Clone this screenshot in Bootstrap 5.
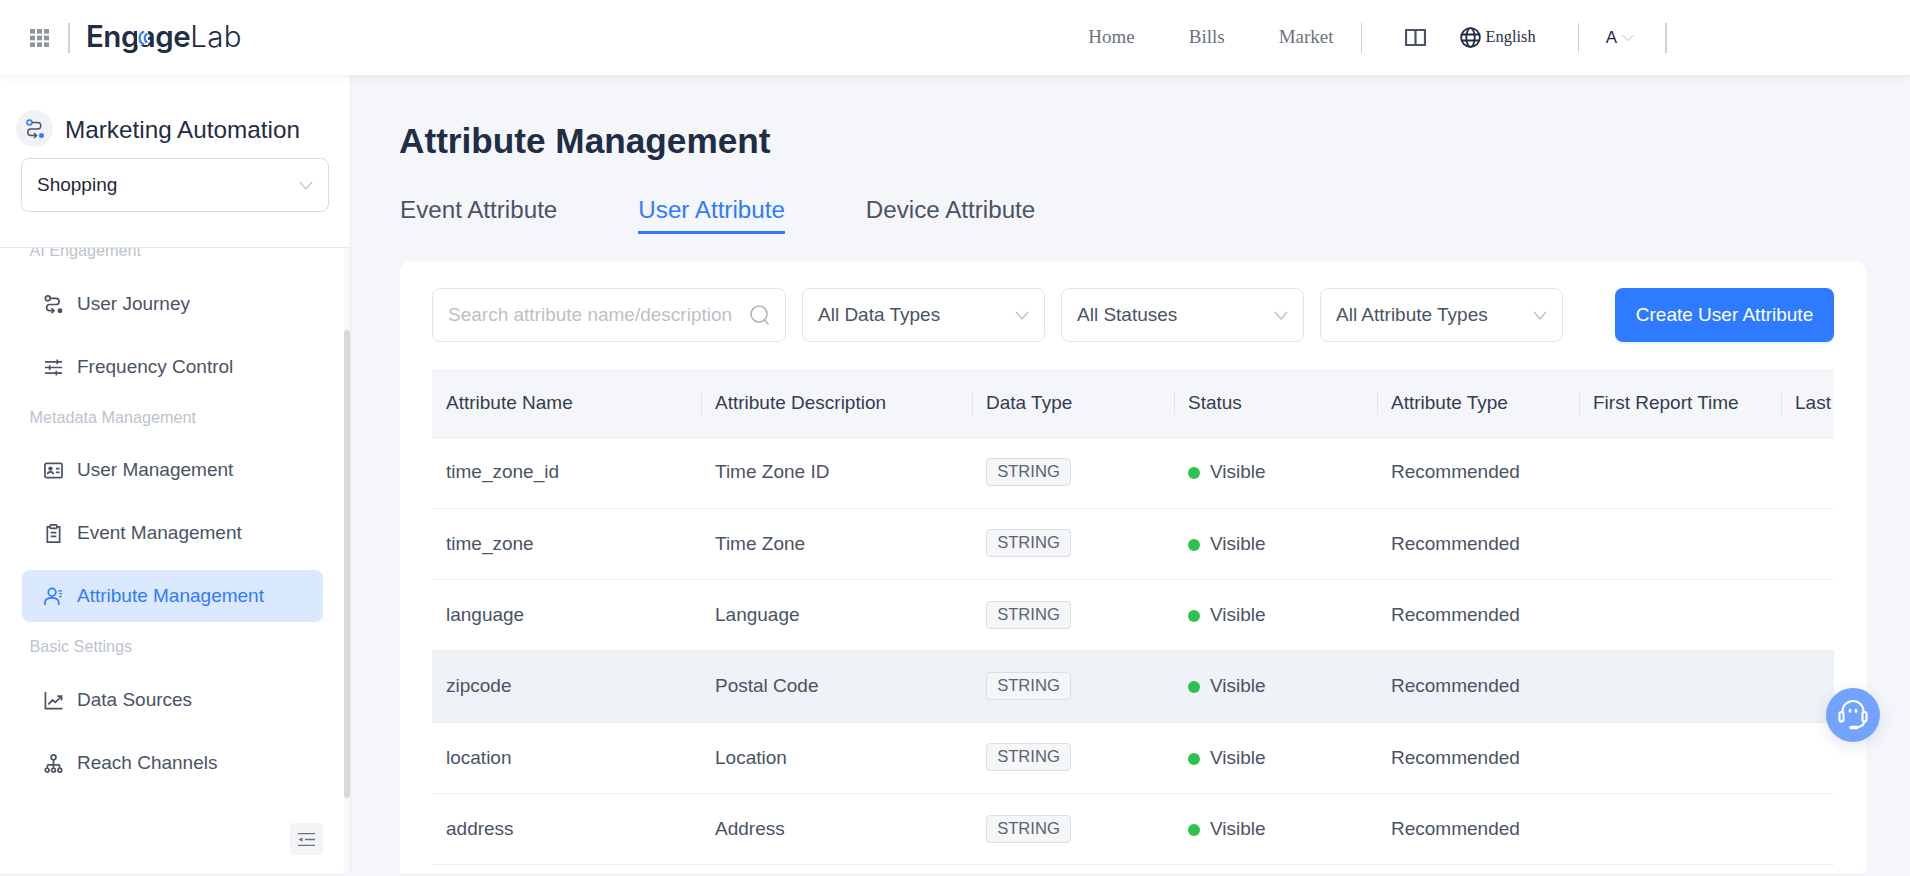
<!doctype html>
<html lang="en">
<head>
  <meta charset="utf-8">
  <title>Attribute Management</title>
  <link href="https://cdn.jsdelivr.net/npm/bootstrap@5.3.0/dist/css/bootstrap.min.css" rel="stylesheet">
  <style>
    html, body { height: 100%; }
    body {
      font-family: "Liberation Sans", Arial, sans-serif;
      background: #f5f6fa;
      color: #4a5365;
      padding-bottom: 3px;
    }

    .top-bar {
      height: 75px;
      flex: 0 0 75px;
      background: #fff;
      box-shadow: 0 2px 8px rgba(30, 50, 90, .08);
      padding: 0 243px 0 30px;
      position: relative;
      z-index: 5;
    }
    .bar-sep { width: 1px; height: 30px; background: #cdd0d6; }
    .bar-sep.heavy { width: 2px; }
    .brand-word {
      position: relative;
      font-family: Inter, sans-serif;
      font-weight: 600;
      font-size: 29.5px;
      line-height: 30px;
      letter-spacing: -.5px;
      color: #1f2d45;
      margin: 0 0 4px 16px;
    }
    .brand-word .lab { font-weight: 300; letter-spacing: .4px; }
    .brand-arc { position: absolute; left: 49px; top: 8px; }
    .top-link {
      font-family: "Liberation Serif", serif;
      font-size: 19px;
      color: #6b7280;
      text-decoration: none;
    }
    .lang-link {
      font-family: "Liberation Serif", serif;
      font-size: 16.4px;
      color: #1f2d45;
    }

    .side-panel {
      width: 351px;
      flex: 0 0 351px;
      background: #fff;
      border-right: 1px solid #e8eaef;
      position: relative;
    }
    .side-head { height: 173px; padding: 35px 0 0 16px; border-bottom: 1px solid #e6e8ec; flex: 0 0 173px; }
    .side-circle {
      width: 37px; height: 37px; border-radius: 50%;
      background: #f1f2f5;
    }
    .side-title { font-size: 24.3px; line-height: 35px; margin-top: 1px; color: #1f2d45; }
    .side-select {
      width: 308px; height: 54px; margin: 11px 0 0 5px; padding: 0 15px;
      border: 1px solid #d9dbe0; border-radius: 8px;
      font-size: 19px; color: #1f2937;
    }
    .side-scroll { overflow: hidden; }
    .side-list { margin-top: -21px; }
    .side-group {
      height: 51px; line-height: 49px;
      padding-left: 29.5px;
      font-size: 16.2px; color: #bcc3ce;
    }
    .side-group.head { line-height: 47px; }
    .side-group.tail { height: 52px; line-height: 49px; }
    .side-item {
      height: 52px; width: 301px;
      margin: 0 0 11px 22px;
      padding-left: 22px;
      border-radius: 8px;
      font-size: 19px;
      color: #4a5365;
      gap: 14px;
    }
    .side-item.last-in-group { margin-bottom: 0; }
    .side-item.on { background: #dbe9ff; color: #2f7bff; }
    .side-track { position: absolute; right: 0; top: 173px; bottom: 0; width: 6px; background: #f8f9fa; }
    .side-thumb { position: absolute; right: 0; top: 255px; height: 468px; width: 6px; background: #d9dadc; border-radius: 3px; }
    .side-collapse {
      position: absolute; right: 27px; bottom: 18px;
      width: 33px; height: 32px; border-radius: 4px;
      background: #f2f4f8;
    }

    .main-pane { overflow: hidden; padding: 43px 44px 0 49px; }
    .page-title { font-size: 35.2px; font-weight: 700; line-height: 46px; color: #1f2d45; margin: 0 0 0 -1px; }
    .tab-row { margin-top: 32px; gap: 81px; }
    .tab-link {
      font-size: 24.2px; line-height: 28px; padding-bottom: 7px;
      border-bottom: 3px solid transparent;
      color: #4a5365; text-decoration: none;
    }
    .tab-link.on { color: #2f7bff; border-bottom-color: #2f7bff; }
    .sheet {
      margin-top: 27px;
      background: #fff;
      border-radius: 10px;
      padding: 27px 32px 0 32px;
      height: 700px;
    }
    .tool-row { gap: 16px; }
    .filter-box {
      height: 54px; padding: 0 15px;
      border: 1px solid #e3e5e9; border-radius: 8px;
      font-size: 19px; color: #4a5365; background: #fff;
    }
    .filter-box.search { width: 354px; color: #bcc0c7; }
    .w-a { width: 243px; }
    .w-b { width: 243px; }
    .w-c { width: 243px; }
    .create-btn {
      margin-left: auto;
      width: 219px; height: 54px; padding: 0;
      background: #2f7bff; border: 0; border-radius: 8px;
      color: #fff; font-size: 19px;
      box-shadow: 0 2px 0 rgba(47, 123, 255, .1);
    }
    .grid-wrap { margin-top: 27px; overflow: hidden; }
    .attr-grid { table-layout: fixed; width: 1600px; margin: 0; border-collapse: collapse; }
    .attr-grid th {
      height: 68px; padding: 0 14px;
      background: #f5f6fa; color: #333d4f;
      font-size: 19px; font-weight: 400;
      border-bottom: 1px solid #e8eaef;
      position: relative;
    }
    .attr-grid th + th::before {
      content: ""; position: absolute; left: 0; top: 22px; height: 24px; width: 1px; background: #e3e5ea;
    }
    .attr-grid td {
      height: 71.3px; padding: 0 14px;
      font-size: 19px; color: #4a5365;
      border-bottom: 1px solid #eceef1;
      background: transparent;
      vertical-align: middle;
    }
    .attr-grid tr.hovered td { background: #eff2f7; }
    .type-tag {
      display: inline-block; width: 85px; height: 28px; line-height: 26px;
      text-align: center; font-size: 16.6px; color: #5a6475;
      background: #f5f6f7; border: 1px solid #dcdee2; border-radius: 4px;
      position: relative; top: -1px;
    }
    .state-dot { display: inline-block; width: 12px; height: 12px; border-radius: 50%; background: #2fc14f; margin-right: 10px; position: relative; top: 1px; }
    .help-bubble {
      position: absolute; left: 1826px; top: 688px;
      width: 54px; height: 54px; border-radius: 50%;
      background: #74a2ff;
      box-shadow: 0 4px 16px rgba(40, 70, 130, .14);
      z-index: 10;
    }
  </style>
</head>
<body class="d-flex flex-column overflow-hidden">

  <header class="top-bar d-flex align-items-center">
    <svg width="19" height="18" viewBox="0 0 19 18" fill="#8f949c">
      <rect x="0" y="0" width="5" height="4.6"/><rect x="7" y="0" width="5" height="4.6"/><rect x="14" y="0" width="5" height="4.6"/>
      <rect x="0" y="6.7" width="5" height="4.6"/><rect x="7" y="6.7" width="5" height="4.6"/><rect x="14" y="6.7" width="5" height="4.6"/>
      <rect x="0" y="13.4" width="5" height="4.6"/><rect x="7" y="13.4" width="5" height="4.6"/><rect x="14" y="13.4" width="5" height="4.6"/>
    </svg>
    <span class="bar-sep heavy" style="margin-left:19px"></span>
    <span class="brand-word">Engage<span class="lab">Lab</span>
      <svg class="brand-arc" width="16" height="18" viewBox="0 0 16 18" fill="none">
        <rect x="2" y="2" width="11" height="14" fill="#fff"/>
        <path d="M9 2.500A7 7 0 0 0 9 15.500" stroke="#2f7bff" stroke-width="2.200"/>
        <path d="M12.500 4.500A5 5 0 0 0 12.500 13.500" stroke="#2f7bff" stroke-width="2"/>
      </svg>
    </span>

    <nav class="d-flex align-items-center ms-auto">
      <a class="top-link" href="#">Home</a>
      <a class="top-link" href="#" style="margin-left:54px">Bills</a>
      <a class="top-link" href="#" style="margin-left:54px">Market</a>
    </nav>
    <span class="bar-sep" style="margin-left:27px"></span>
    <svg style="margin-left:43px" width="21" height="21" viewBox="0 0 21 21" fill="none" stroke="#4a5365" stroke-width="2.200">
      <path d="M1 3h19v15H1zM10.500 3v15" stroke-linejoin="round"/>
    </svg>
    <svg style="margin-left:34px" width="21" height="21" viewBox="0 0 21 21" fill="none" stroke="#1f2d45" stroke-width="1.800">
      <circle cx="10.500" cy="10.500" r="9.400"/><ellipse cx="10.500" cy="10.500" rx="4.200" ry="9.400"/><path d="M1.500 7.500h18M1.500 13.500h18"/>
    </svg>
    <span class="lang-link" style="margin-left:5px">English</span>
    <span class="bar-sep" style="margin-left:42px"></span>
    <span class="lang-link" style="margin-left:27px;font-family:'Liberation Sans',sans-serif;font-size:17px">A</span>
    <svg style="margin-left:5px" width="12" height="8" viewBox="0 0 12 8" fill="none" stroke="#b8bcc4"><path d="M.5 1l5.500 5.500L11.500 1"/></svg>
    <span class="bar-sep heavy" style="margin-left:31px"></span>
  </header>

  <div class="d-flex flex-grow-1" style="min-height:0">
    <aside class="side-panel d-flex flex-column">
      <div class="side-head">
        <div class="d-flex align-items-center gap-2">
          <span class="side-circle d-flex align-items-center justify-content-center">
            <svg width="20" height="20" viewBox="0 0 20 20" fill="none" stroke="#4a5365" stroke-width="1.500">
              <circle cx="4.500" cy="3.500" r="2.500" stroke="#2f7bff"/>
              <path d="M7 3.500h5.500a3 3 0 0 1 0 6.500H6a3 3 0 0 0 0 6.500h5"/><path d="M9 14l2.500 2.500L9 19"/>
              <circle cx="16.500" cy="16.500" r="2.500" fill="#2f7bff" stroke="none"/>
            </svg>
          </span>
          <span class="side-title ms-1">Marketing Automation</span>
        </div>
        <div class="side-select d-flex align-items-center justify-content-between">
          <span>Shopping</span>
          <svg width="14" height="9" viewBox="0 0 14 9" fill="none" stroke="#c0c4ca" stroke-width="1.200"><path d="M1 1l6 7 6-7"/></svg>
        </div>
      </div>

      <div class="side-scroll flex-grow-1">
        <div class="side-list">
          <div class="side-group head">AI Engagement</div>
          <div class="side-item d-flex align-items-center">
            <svg width="19" height="19" viewBox="0 0 20 20" fill="none" stroke="currentColor" stroke-width="1.800">
              <circle cx="4" cy="3.500" r="2.600"/><path d="M6.600 3.500h6a3 3 0 0 1 0 6.500H6a3 3 0 0 0 0 6.500h4.500"/><path d="M8 14l2.500 2.500L8 19"/><circle cx="16.800" cy="16.500" r="2.600" fill="currentColor" stroke="none"/>
            </svg>
            <span>User Journey</span>
          </div>
          <div class="side-item last-in-group d-flex align-items-center">
            <svg width="19" height="19" viewBox="0 0 20 20" fill="none" stroke="currentColor" stroke-width="1.800">
              <path d="M1 4h18M1 10h18M1 16h18M14 1.500v5M6 7.500v5M13 13.500v5"/>
            </svg>
            <span>Frequency Control</span>
          </div>
          <div class="side-group">Metadata Management</div>
          <div class="side-item d-flex align-items-center">
            <svg width="19" height="19" viewBox="0 0 20 20" fill="none" stroke="currentColor" stroke-width="1.800">
              <rect x="1" y="2.500" width="18" height="15" rx="1.500"/><circle cx="6.800" cy="8" r="1.400" fill="currentColor"/><path d="M3.800 14c.3-3.500 5.700-3.500 6 0M12.500 8h4M12.500 12h4"/>
            </svg>
            <span>User Management</span>
          </div>
          <div class="side-item d-flex align-items-center">
            <svg width="19" height="19" viewBox="0 0 20 20" fill="none" stroke="currentColor" stroke-width="1.800">
              <path d="M6.500 3H3.500v16h13V3h-3"/><rect x="6.500" y="1" width="7" height="3.500" rx=".8"/><path d="M7 9h6M7 13h6"/>
            </svg>
            <span>Event Management</span>
          </div>
          <div class="side-item on last-in-group d-flex align-items-center">
            <svg width="19" height="19" viewBox="0 0 20 20" fill="none" stroke="currentColor" stroke-width="1.800">
              <circle cx="8.500" cy="5.500" r="4"/><path d="M1 19v-2.500c0-3 3-5 7.500-5 2 0 3.700.4 5 1.200 1.500 1 2 2.500 2 3.800V19"/><path d="M15 4h4M16 7h3M16 10h2.500" stroke-width="1.400"/>
            </svg>
            <span>Attribute Management</span>
          </div>
          <div class="side-group tail">Basic Settings</div>
          <div class="side-item d-flex align-items-center">
            <svg width="19" height="19" viewBox="0 0 20 20" fill="none" stroke="currentColor" stroke-width="1.800">
              <path d="M1.500 1v17.500H19.500"/><path d="M4.500 14l4.500-4.500 3 2.500 6-6M14 5.500h4.500V10"/>
            </svg>
            <span>Data Sources</span>
          </div>
          <div class="side-item d-flex align-items-center">
            <svg width="19" height="19" viewBox="0 0 20 20" fill="none" stroke="currentColor" stroke-width="1.800">
              <circle cx="10" cy="3.500" r="2.600"/><path d="M10 6v5.500M3.500 15.500v-2.500c0-1 .6-1.500 1.500-1.500h10c.9 0 1.500.5 1.500 1.500v2.500M10 11.500v4"/><circle cx="3.300" cy="17" r="2"/><circle cx="10" cy="17" r="2"/><circle cx="16.700" cy="17" r="2"/>
            </svg>
            <span>Reach Channels</span>
          </div>
        </div>
      </div>
      <div class="side-track"></div>
      <div class="side-thumb"></div>
      <div class="side-collapse d-flex align-items-center justify-content-center">
        <svg width="17" height="13" viewBox="0 0 17 13" fill="none" stroke="#6b7280" stroke-width="1.300">
          <path d="M0 .7h17M7 6.500h10M0 12.300h17"/><path d="M4.500 4.200v4.600L.6 6.500z" fill="#6b7280" stroke="none"/>
        </svg>
      </div>
    </aside>

    <main class="main-pane flex-grow-1">
      <h1 class="page-title">Attribute Management</h1>
      <div class="tab-row d-flex">
        <a class="tab-link" href="#">Event Attribute</a>
        <a class="tab-link on" href="#">User Attribute</a>
        <a class="tab-link" href="#">Device Attribute</a>
      </div>

      <section class="sheet">
        <div class="tool-row d-flex">
          <div class="filter-box search d-flex align-items-center justify-content-between">
            <span>Search attribute name/description</span>
            <svg width="20" height="21" viewBox="0 0 20 21" fill="none" stroke="#b0b4bb" stroke-width="1.600"><circle cx="9" cy="9" r="8"/><path d="M14.500 15l4 4.500"/></svg>
          </div>
          <div class="filter-box w-a d-flex align-items-center justify-content-between">
            <span>All Data Types</span>
            <svg width="14" height="9" viewBox="0 0 14 9" fill="none" stroke="#b8bcc4" stroke-width="1.200"><path d="M1 1l6 7 6-7"/></svg>
          </div>
          <div class="filter-box w-b d-flex align-items-center justify-content-between">
            <span>All Statuses</span>
            <svg width="14" height="9" viewBox="0 0 14 9" fill="none" stroke="#b8bcc4" stroke-width="1.200"><path d="M1 1l6 7 6-7"/></svg>
          </div>
          <div class="filter-box w-c d-flex align-items-center justify-content-between">
            <span>All Attribute Types</span>
            <svg width="14" height="9" viewBox="0 0 14 9" fill="none" stroke="#b8bcc4" stroke-width="1.200"><path d="M1 1l6 7 6-7"/></svg>
          </div>
          <button class="btn create-btn" type="button">Create User Attribute</button>
        </div>

        <div class="grid-wrap">
          <table class="attr-grid">
            <colgroup>
              <col style="width:269px"><col style="width:271px"><col style="width:202px"><col style="width:203px"><col style="width:202px"><col style="width:202px"><col style="width:251px">
            </colgroup>
            <thead>
              <tr><th>Attribute Name</th><th>Attribute Description</th><th>Data Type</th><th>Status</th><th>Attribute Type</th><th>First Report Time</th><th>Last Report Time</th></tr>
            </thead>
            <tbody>
              <tr><td>time_zone_id</td><td>Time Zone ID</td><td><span class="type-tag">STRING</span></td><td><span class="state-dot"></span>Visible</td><td>Recommended</td><td></td><td></td></tr>
              <tr><td>time_zone</td><td>Time Zone</td><td><span class="type-tag">STRING</span></td><td><span class="state-dot"></span>Visible</td><td>Recommended</td><td></td><td></td></tr>
              <tr><td>language</td><td>Language</td><td><span class="type-tag">STRING</span></td><td><span class="state-dot"></span>Visible</td><td>Recommended</td><td></td><td></td></tr>
              <tr class="hovered"><td>zipcode</td><td>Postal Code</td><td><span class="type-tag">STRING</span></td><td><span class="state-dot"></span>Visible</td><td>Recommended</td><td></td><td></td></tr>
              <tr><td>location</td><td>Location</td><td><span class="type-tag">STRING</span></td><td><span class="state-dot"></span>Visible</td><td>Recommended</td><td></td><td></td></tr>
              <tr><td>address</td><td>Address</td><td><span class="type-tag">STRING</span></td><td><span class="state-dot"></span>Visible</td><td>Recommended</td><td></td><td></td></tr>
            </tbody>
          </table>
        </div>
      </section>
    </main>
  </div>

  <div class="help-bubble d-flex align-items-center justify-content-center">
    <svg width="32" height="32" viewBox="0 0 32 32" fill="none" stroke="#fff" stroke-width="2.200" stroke-linecap="round">
      <path d="M5.500 13v-.5a10.500 10.500 0 0 1 21 0v.5"/>
      <rect x="2.500" y="13" width="4" height="9.500" rx="2"/>
      <rect x="25.500" y="13" width="4" height="9.500" rx="2"/>
      <path d="M27 22.500c0 3.500-2.500 5-6 5.500"/>
      <path d="M14 28.500h6" stroke-width="3.400"/>
      <path d="M13 11v1.500M19 11v1.500" stroke-width="2.600"/>
    </svg>
  </div>

  <script src="https://cdn.jsdelivr.net/npm/bootstrap@5.3.0/dist/js/bootstrap.bundle.min.js"></script>
</body>
</html>
